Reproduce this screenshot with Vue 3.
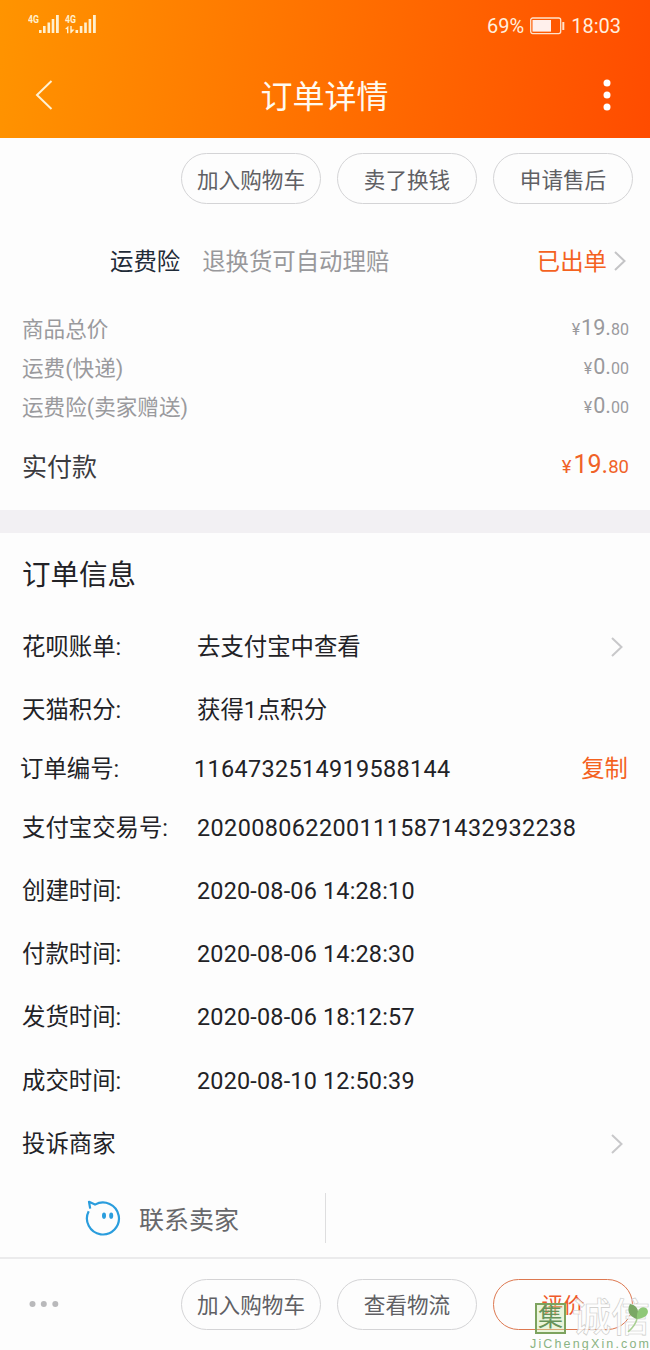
<script setup>
const topActions = ['加入购物车', '卖了换钱', '申请售后']
const costs = [
  { label: '商品总价', whole: '19.', cents: '80' },
  { label: '运费(快递)', whole: '0.', cents: '00' },
  { label: '运费险(卖家赠送)', whole: '0.', cents: '00' },
]
const infos = [
  { label: '花呗账单:', value: '去支付宝中查看', arrow: true },
  { label: '天猫积分:', value: '获得1点积分' },
  { label: '订单编号:', value: '1164732514919588144', num: true, copy: true, kind: 'order-no' },
  { label: '支付宝交易号:', value: '2020080622001115871432932238', num: true, kind: 'trade-no' },
  { label: '创建时间:', value: '2020-08-06 14:28:10', kind: 'time' },
  { label: '付款时间:', value: '2020-08-06 14:28:30', kind: 'time' },
  { label: '发货时间:', value: '2020-08-06 18:12:57', kind: 'time' },
  { label: '成交时间:', value: '2020-08-10 12:50:39', kind: 'time' },
  { label: '投诉商家', value: '', arrow: true },
]
</script>

<template>
  <div class="page">
    <header class="header">
      <div class="status">
        <svg class="signals" width="72" height="24" viewBox="0 0 72 24">
          <g fill="#fff0cf">
            <text x="0" y="9" class="net" textLength="11" lengthAdjust="spacingAndGlyphs">4G</text>
            <rect x="11" y="16" width="2.6" height="3" />
            <rect x="15" y="12" width="2.6" height="7" />
            <rect x="19.5" y="8.5" width="2.6" height="10.5" />
            <rect x="23.7" y="5" width="2.6" height="14" />
            <rect x="28" y="1" width="2.8" height="18" />
            <text x="37" y="9" class="net" textLength="11" lengthAdjust="spacingAndGlyphs">4G</text>
            <path d="M37 15l3.4-3.2v7.4h-1.4v-4zM42.300 12h1.400v3.500h2.800l-3.400 3.700h-.8z" />
            <rect x="47.500" y="16" width="2.600" height="3" />
            <rect x="51.800" y="12" width="2.600" height="7" />
            <rect x="56.200" y="8.500" width="2.600" height="10.500" />
            <rect x="60.600" y="5" width="2.600" height="14" />
            <rect x="65" y="1" width="2.800" height="18" />
          </g>
        </svg>
        <div class="status-right">
          <span>69%</span>
          <svg width="35" height="18" viewBox="0 0 35 18">
            <rect x="0.700" y="1" width="30" height="15.600" rx="2" fill="none" stroke="#ffe3cc" stroke-width="1.300" />
            <rect x="2.500" y="3" width="18.500" height="11.600" fill="#fff0ec" />
            <path d="M33.300 5v8" stroke="#ffe3cc" stroke-width="2" />
          </svg>
          <span>18:03</span>
        </div>
      </div>
      <div class="titlebar">
        <svg width="18" height="30" viewBox="0 0 18 30">
          <path d="M16.500 1L2 15l14.500 14" fill="none" stroke="#fff1d2" stroke-width="2" />
        </svg>
        <h1>订单详情</h1>
        <svg width="8" height="32" viewBox="0 0 8 32" fill="#fff">
          <circle cx="4" cy="4" r="3.500" /><circle cx="4" cy="16" r="3.500" /><circle cx="4" cy="28" r="3.500" />
        </svg>
      </div>
    </header>

    <section class="actions">
      <button v-for="a in topActions" :key="a" class="pill">{{ a }}</button>
    </section>

    <section class="insurance">
      <span class="ins-name">运费险</span>
      <span class="ins-desc">退换货可自动理赔</span>
      <span class="ins-state">已出单</span>
      <svg width="12" height="20" viewBox="0 0 12 20"><path d="M1 1l9.500 9L1 19" fill="none" stroke="#c4c4c6" stroke-width="2" /></svg>
    </section>

    <section class="costs">
      <div v-for="c in costs" :key="c.label" class="cost">
        <span>{{ c.label }}</span>
        <span class="price"><i>¥</i><b>{{ c.whole }}</b><em>{{ c.cents }}</em></span>
      </div>
      <div class="cost paid">
        <span>实付款</span>
        <span class="price"><i>¥</i><b>19.</b><em>80</em></span>
      </div>
    </section>

    <div class="divider"></div>

    <section class="info">
      <h2>订单信息</h2>
      <div v-for="r in infos" :key="r.label" class="row" :class="r.kind">
        <span class="label">{{ r.label }}</span>
        <span class="value" :class="{ num: r.num }">{{ r.value }}</span>
        <span v-if="r.copy" class="copy">复制</span>
        <svg v-if="r.arrow" class="arrow" width="12" height="20" viewBox="0 0 12 20"><path d="M1 1l9.500 9L1 19" fill="none" stroke="#c8c8ca" stroke-width="2" /></svg>
      </div>
    </section>

    <section class="contact">
      <div class="contact-main">
        <svg width="36" height="36" viewBox="0 0 36 36">
          <path d="M3.700 11.200A16 16 0 1 0 10 4.600L4 1.800L5.200 8.600" fill="none" stroke="#2a9ddd" stroke-width="2.200" stroke-linejoin="round" />
          <ellipse cx="19" cy="15.700" rx="2" ry="3.100" fill="#2a9ddd" />
          <ellipse cx="26.200" cy="15.700" rx="2" ry="3.100" fill="#2a9ddd" />
        </svg>
        <span>联系卖家</span>
      </div>
    </section>

    <footer class="footer">
      <svg width="30" height="8" viewBox="0 0 30 8" fill="#b9b9bb">
        <circle cx="3.500" cy="4" r="3" /><circle cx="14.800" cy="4" r="3" /><circle cx="26.300" cy="4" r="3" />
      </svg>
      <div class="footer-actions">
        <button class="pill">加入购物车</button>
        <button class="pill">查看物流</button>
        <button class="pill rate">评价</button>
      </div>
    </footer>

    <div class="watermark">
      <div class="mark">
        <span class="seal">集</span>
        <span class="outline">诚信</span>
        <svg class="leaf" width="22" height="32" viewBox="0 0 22 32">
          <path d="M3 1c7 1 10 7 7 15C3 14-1 8 3 1z" fill="#7aa765" />
          <path d="M10 16c-1-9 4-14 9-11c4 3 2 10-9 11z" fill="#8fc878" />
          <path d="M10 16Q8 23 1 29" stroke="#a9d093" stroke-width="1.500" fill="none" />
        </svg>
      </div>
      <div class="site">JiChengXin.com</div>
    </div>
  </div>
</template>

<style>
body {
  background: #fdfdfd;
}
</style>

<style scoped>
.page {
  position: relative;
  width: 650px;
  height: 1350px;
  overflow: hidden;
  background: #fdfdfd;
  color: #222226;
  font-family: Roboto, "Noto Sans CJK SC", sans-serif;
  font-size: 23.4px;
  display: flex;
  flex-direction: column;
}
svg {
  display: block;
  flex: none;
}
.header {
  height: 138px;
  flex: none;
  background: linear-gradient(98deg, #ff9400 0%, #ff7400 45%, #ff4c00 100%);
}
.status {
  display: flex;
  justify-content: space-between;
  align-items: center;
  height: 52px;
  padding: 0 29px 0 28px;
}
.net {
  font: bold 10px Roboto, sans-serif;
}
.status-right {
  display: flex;
  align-items: center;
  gap: 6px;
  font-size: 20px;
  color: #ffeede;
}
.titlebar {
  display: flex;
  align-items: center;
  justify-content: space-between;
  height: 86px;
  padding: 0 39px 0 35px;
}
h1 {
  margin: 4px 0 0 -7px;
  font-size: 32px;
  line-height: 46px;
  font-weight: 400;
  color: #fffaf0;
}
.actions {
  display: flex;
  justify-content: flex-end;
  gap: 16px;
  padding: 15px 17px 0 0;
}
.pill {
  box-sizing: border-box;
  width: 140px;
  height: 51px;
  padding: 0 0 1px;
  border: 1px solid #d4d4d6;
  border-radius: 26px;
  background: transparent;
  color: #606064;
  font-family: inherit;
  font-size: 21.6px;
}
.insurance {
  display: flex;
  align-items: center;
  height: 114px;
  padding: 0 24px 0 110px;
}
.insurance span {
  position: relative;
  top: -1px;
}
.ins-name {
  color: #1f2b38;
}
.ins-desc {
  margin-left: 22px;
  color: #98989b;
}
.ins-state {
  margin: 0 7px 0 auto;
  color: #f4621f;
}
.costs {
  height: 192px;
  padding: 0 21px 0 22px;
  color: #9a9a9d;
  font-size: 21.6px;
}
.cost {
  display: flex;
  justify-content: space-between;
  align-items: center;
  height: 39px;
}
.costs .cost:first-child {
  margin-top: -10px;
}
.price i,
.price b,
.price em {
  font-style: normal;
  font-weight: 400;
}
.price {
  line-height: 26px;
  margin-top: 2px;
}
.price i,
.price em {
  font-size: 16px;
}
.price i {
  margin-right: 1px;
}
.price b {
  font-size: 21.600px;
}
.cost.paid {
  margin-top: 20px;
  font-size: 25px;
  color: #3b3b3f;
}
.paid .price {
  color: #f06228;
}
.paid i,
.paid em {
  font-size: 18.500px;
}
.paid i {
  margin-right: 2px;
}
.paid b {
  font-size: 25px;
}
.divider {
  height: 23px;
  flex: none;
  background: #f2f0f3;
}
.info {
  padding: 1px 22px 0;
}
h2 {
  margin: 0;
  height: 81px;
  line-height: 83px;
  font-size: 28.500px;
  font-weight: 400;
}
.row {
  display: flex;
  align-items: center;
  height: 63.200px;
  line-height: 34px;
}
.row.order-no {
  height: 56px;
  margin-left: -2px;
}
.row.trade-no {
  height: 62px;
}
.label {
  width: 175px;
  flex: none;
  white-space: nowrap;
}
.num {
  letter-spacing: .4px;
  white-space: nowrap;
}
.order-no .label {
  width: 174px;
}
.order-no .num {
  letter-spacing: .35px;
}
.time .value {
  letter-spacing: .19px;
}
.copy {
  margin-left: auto;
  color: #f4621f;
}
.arrow {
  margin-left: auto;
  margin-right: 5px;
}
.contact {
  height: 78px;
  display: flex;
  flex: none;
  align-items: center;
  margin-top: auto;
}
.contact-main {
  box-sizing: border-box;
  width: 326px;
  height: 50px;
  padding-left: 85px;
  display: flex;
  align-items: center;
  gap: 18px;
  border-right: 1px solid #dededf;
  color: #68686b;
  font-size: 25px;
}
.footer {
  box-sizing: border-box;
  height: 93px;
  flex: none;
  border-top: 2px solid #ebebec;
  display: flex;
  align-items: center;
  justify-content: space-between;
  padding: 0 17px 1px 29px;
}
.footer-actions {
  display: flex;
  gap: 16px;
}
.rate {
  border-color: #dd7850;
  color: #ef5a2b;
}
.watermark {
  position: absolute;
  left: 530px;
  top: 1300px;
  width: 122px;
}
.mark {
  display: flex;
  align-items: center;
  height: 36px;
  padding-left: 5px;
}
.seal {
  box-sizing: border-box;
  width: 31px;
  height: 31px;
  border: 2px solid #7da35f;
  background: rgba(205, 232, 170, .4);
  color: #66935a;
  font-size: 25px;
  line-height: 26px;
  display: flex;
  align-items: center;
  justify-content: center;
}
.outline {
  margin-left: 6px;
  font-size: 39px;
  line-height: 36px;
  font-weight: 500;
  white-space: nowrap;
  color: rgba(255, 255, 255, .85);
  -webkit-text-stroke: .6px #cbcbc8;
}
.leaf {
  position: absolute;
  left: 97px;
  top: 3px;
}
.site {
  font: 12.500px/14px "Liberation Sans", sans-serif;
  letter-spacing: 2.150px;
  color: #8ab383;
  margin-top: 1px;
  white-space: nowrap;
}
</style>
